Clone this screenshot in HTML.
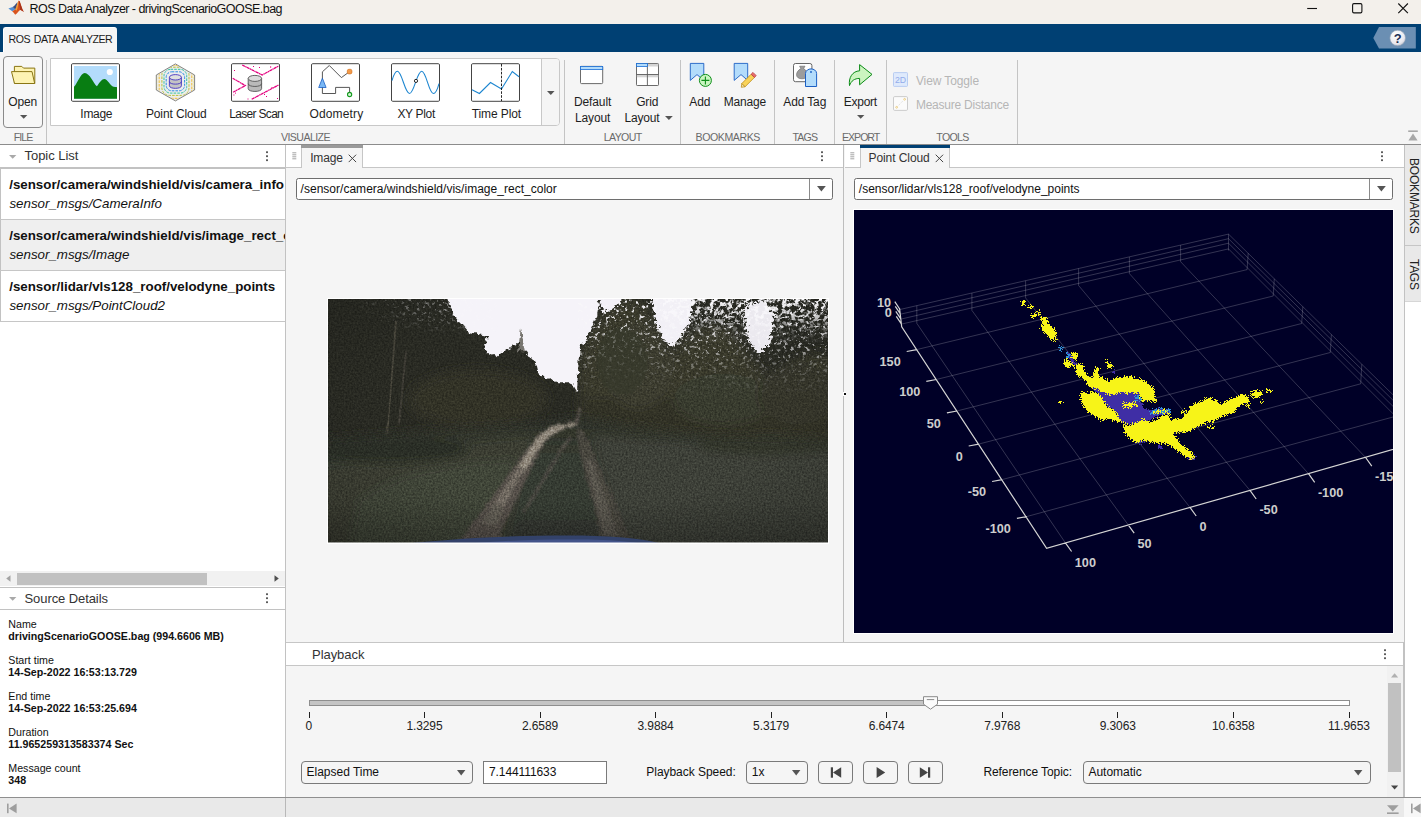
<!DOCTYPE html>
<html lang="en">
<head>
<meta charset="utf-8">
<title>ROS Data Analyzer - drivingScenarioGOOSE.bag</title>
<style>
*{box-sizing:border-box;margin:0;padding:0}
html,body{width:1421px;height:817px;overflow:hidden;background:#f5f5f5}
body{position:relative;font-family:"Liberation Sans",sans-serif;font-size:12px;color:#222;-webkit-font-smoothing:antialiased}
.abs,.t,.ln,.box{position:absolute}
.t{white-space:nowrap;line-height:1}
svg{position:absolute;overflow:visible}
.ts{font-size:12px;color:#1e1e1e}
.c{text-align:center}
.sec{font-size:11px;color:#6a6a6a;letter-spacing:.1px}
.vsep{position:absolute;top:60px;height:84px;width:1px;background:#c4c4c4}
.dis{color:#b4b4b4}
.dd{position:absolute;height:23px;border:1px solid #7a7a7a;border-radius:4px;background:#f5f5f5}
.ddw{background:#fff}
.arr{position:absolute;width:0;height:0;border-left:4.5px solid transparent;border-right:4.5px solid transparent;border-top:6px solid #555}
.b{font-weight:bold}
.i{font-style:italic}
</style>
</head>
<body>
<!-- p1_toolstrip -->
<div class="box" style="left:0px;top:0px;width:1421px;height:24px;background:#f3f0eb;"></div>
<svg style="left:8px;top:0px" width="17" height="16" viewBox="0 0 17 16">
<path d="M0.4 8.6 L4.6 6.9 L7.3 9.6 L4.2 11.2 Z" fill="#4f8fd6"/>
<path d="M4.6 6.9 C6.8 5.6 8.3 3.4 9.4 1.9 L8.6 7.2 L7.3 9.6 Z" fill="#3b4f7d"/>
<path d="M4.2 11.2 L7.3 9.6 C8.4 7.4 9.3 3.5 10.6 0.8 C11.6 0.6 12.2 2.6 13 5.2 C13.9 8 14.9 10.6 16 11.8 C14.2 11.2 13.3 9.8 12.2 10 C10.8 10.4 9.6 13.2 7.2 14.8 C6.2 13.2 5.2 12 4.2 11.2 Z" fill="#d9541e"/>
<path d="M10.6 0.8 C11.6 0.6 12.2 2.6 13 5.2 C13.9 8 14.9 10.6 16 11.8 C14.2 11.2 13.3 9.8 12.2 10 C11.8 7 11.2 3.6 10.6 0.8 Z" fill="#a8321a"/>
<path d="M7.3 9.6 C8.4 7.4 9.3 3.5 10.6 0.8 C10.4 4 10 7.6 8.6 10.8 Z" fill="#f0a23a"/>
</svg>
<div class="t" style="left:29.60px;top:2.85px;font-size:12.5px;letter-spacing:-0.532px;color:#111;">ROS Data Analyzer - drivingScenarioGOOSE.bag</div>
<svg style="left:1300px;top:0" width="121" height="24" viewBox="0 0 121 24">
<path d="M7.2 8.5 H17" stroke="#111" stroke-width="1.1" fill="none"/>
<rect x="52.6" y="3.6" width="9.3" height="9.3" rx="1.3" stroke="#111" stroke-width="1.1" fill="none"/>
<path d="M98.3 3.5 L107.9 13.1 M107.9 3.5 L98.3 13.1" stroke="#111" stroke-width="1.1" fill="none"/>
</svg>
<div class="box" style="left:0px;top:24px;width:1421px;height:28px;background:#004073;"></div>
<div class="box" style="left:3px;top:27px;width:114px;height:25px;background:#f5f5f5;border-radius:3px 3px 0 0;border-top:1px solid #fff;border-left:1px solid #fff;"></div>
<div class="t" style="left:8.60px;top:33.70px;font-size:10.6px;letter-spacing:-0.533px;color:#1a1a1a;word-spacing:1.5px;">ROS DATA ANALYZER</div>
<svg style="left:1370px;top:24px" width="51" height="28" viewBox="0 0 51 28">
<defs><radialGradient id="hg" cx="0.4" cy="0.3" r="0.8"><stop offset="0" stop-color="#ffffff"/><stop offset="0.7" stop-color="#e8e8ee"/><stop offset="1" stop-color="#b8bcc8"/></radialGradient></defs>
<path d="M3.3 14 L9 3 H45.8 V24.6 H9 Z" fill="#6b8fb3"/>
<circle cx="27.7" cy="14" r="7.8" fill="url(#hg)" stroke="#8e9fb4" stroke-width="0.6"/>
<text x="27.7" y="18.6" font-family="Liberation Sans, sans-serif" font-weight="bold" font-size="13" text-anchor="middle" fill="#1d2f55">?</text>
</svg>
<div class="box" style="left:0px;top:52px;width:1421px;height:92px;background:#f5f5f5;"></div>
<div class="box" style="left:0px;top:144px;width:1421px;height:1px;background:#8c8c8c;"></div>
<div class="box" style="left:3px;top:56px;width:40px;height:72px;background:#f7f7f7;border:1px solid #8a8a8a;border-radius:4px;"></div>
<svg style="left:10px;top:64px" width="27" height="22" viewBox="0 0 27 22">
<path d="M4.4 2.4 H11.8 L13.5 4.1 H24.8 V19.4 H4.4 Z" fill="#fdf3b3" stroke="#8a7614" stroke-width="1"/>
<path d="M1.5 7.6 H22 L24.7 19.5 H4.5 Z" fill="#fdf3b3" stroke="#8a7614" stroke-width="1" stroke-linejoin="round"/>
</svg>
<div class="t ts" style="left:8.30px;top:95.70px;font-size:12px;letter-spacing:-0.189px;">Open</div>
<svg style="left:20.2px;top:115.3px" width="7.4" height="3.7" viewBox="0 0 7.4 3.7"><path d="M0 0H7.4L3.7 3.7Z" fill="#555"/></svg>
<div class="t sec" style="left:13.70px;top:131.70px;font-size:10.6px;letter-spacing:-0.921px;">FILE</div>
<div class="vsep" style="left:46px"></div>
<div class="vsep" style="left:564px"></div>
<div class="vsep" style="left:680px"></div>
<div class="vsep" style="left:774px"></div>
<div class="vsep" style="left:834px"></div>
<div class="vsep" style="left:886px"></div>
<div class="vsep" style="left:1017px"></div>
<div class="box" style="left:50px;top:58px;width:510px;height:67.5px;background:#fff;border:1px solid #c8c8c8;border-radius:0 4px 4px 0;"></div>
<div class="box" style="left:541px;top:59px;width:18px;height:65.5px;background:#f5f5f5;border-radius:0 3px 3px 0;border-left:1px solid #c8c8c8;"></div>
<svg style="left:547.3px;top:91.2px" width="7.6" height="3.9" viewBox="0 0 7.6 3.9"><path d="M0 0H7.6L3.8 3.9Z" fill="#555"/></svg>
<svg style="left:50px;top:58px" width="500" height="50" viewBox="50 58 500 50">
<!-- Image -->
<rect x="71.5" y="63.7" width="48" height="37.6" rx="1.2" fill="#fff" stroke="#444" stroke-width="1"/>
<rect x="74" y="66" width="43" height="32.8" fill="#b3dcfb"/>
<path d="M74 86.8 C77 84 80.5 72.9 84.8 72.9 C89.5 72.9 93.5 83 96.9 86.3 C99.5 82.5 102 79 104.3 79 C107.3 79 110.5 86 113.5 86.8 C115 87.1 116.2 86.6 117 87.3 V98.8 H74 Z" fill="#087d12"/>
<circle cx="109.8" cy="72" r="3.1" fill="#fff"/>
<!-- Point Cloud -->
<path d="M175.4 63.9 L194.6 75 V90 L175.4 100.9 L156.3 90 V75 Z" fill="#ececec" stroke="#777" stroke-width="0.9"/>
<clipPath id="hexc"><path d="M175.4 64.6 L194 75.3 V89.7 L175.4 100.2 L156.9 89.7 V75.3 Z"/></clipPath>
<g fill="none" stroke-width="1" stroke-dasharray="2.6 1.1" clip-path="url(#hexc)">
<rect x="156.6" y="63.2" width="37.6" height="37.6" rx="10" stroke="#f8e71c"/>
<rect x="159.2" y="65.5" width="32.6" height="32.8" rx="9" stroke="#f6c132"/>
<rect x="161.9" y="67.2" width="27.1" height="28.2" rx="7.5" stroke="#b9c23a"/>
<rect x="164" y="69.3" width="22.7" height="23.8" rx="6.5" stroke="#35c3a0"/>
<rect x="166.2" y="71.8" width="18.4" height="19" rx="5.5" stroke="#2b8ae6"/>
</g>
<path d="M169.4 77.3 V85.8 C169.4 89.2 181.4 89.2 181.4 85.8 V77.3 Z" fill="#c4c4c4" stroke="#4532c2" stroke-width="0.9"/>
<ellipse cx="175.4" cy="77.3" rx="6" ry="2.7" fill="#e0e0e0" stroke="#4532c2" stroke-width="0.9"/>
<path d="M169.4 81.6 C169.4 85 181.4 85 181.4 81.6" fill="none" stroke="#4532c2" stroke-width="0.9"/>
<!-- Laser Scan -->
<rect x="231.5" y="63.7" width="48" height="37.6" rx="1.2" fill="#fff" stroke="#444" stroke-width="1"/>
<g fill="none" stroke="#e4007f" stroke-width="1.25" stroke-dasharray="3 0.4 1.4 0.3">
<path d="M242.2 65 L262.2 75 L278.6 66"/>
<path d="M232.7 78.2 L245.3 85.6 L232.7 92.4"/>
<path d="M251.7 99.3 L278.6 85"/>
</g>
<g fill="#e4007f"><rect x="253" y="66" width="1" height="1"/><rect x="259" y="67" width="1" height="1"/><rect x="270" y="66.4" width="1.2" height="1.2"/><rect x="233.4" y="94.5" width="1" height="1"/><rect x="235" y="92.6" width="1" height="1"/><rect x="247.5" y="98.5" width="1" height="1"/><rect x="264" y="94" width="1" height="1"/><rect x="266" y="96" width="1" height="1"/><rect x="271.5" y="87" width="1" height="1"/><rect x="277" y="98" width="1" height="1"/><rect x="234" y="70" width="1" height="1"/></g>
<path d="M248.2 78.4 V88.6 C248.2 92.4 261.6 92.4 261.6 88.6 V78.4 Z" fill="#b9b9b9" stroke="#555" stroke-width="0.9"/>
<ellipse cx="254.9" cy="78.4" rx="6.7" ry="3" fill="#dcdcdc" stroke="#555" stroke-width="0.9"/>
<path d="M248.2 83.6 C248.2 87.4 261.6 87.4 261.6 83.6" fill="none" stroke="#555" stroke-width="0.9"/>
<!-- Odometry -->
<rect x="311.5" y="63.7" width="48" height="37.6" rx="1.2" fill="#fff" stroke="#444" stroke-width="1"/>
<path d="M349.6 94.5 V87.4 H335.6 V93.5 H322.4 V71.8 L329.3 65.5 L341.4 77.6 L349.6 71.6" fill="none" stroke="#444" stroke-width="0.9"/>
<path d="M322.4 78.2 L326.1 87.5 H318.7 Z" fill="#7ab8f5" stroke="#1b5fc4" stroke-width="0.8"/>
<rect x="347.3" y="69.3" width="4.6" height="4.6" rx="1.6" fill="#f29a4a" stroke="#d9731c" stroke-width="0.7"/>
<circle cx="349.6" cy="94.5" r="2.1" fill="#d8f5d8" stroke="#139a1e" stroke-width="1.1"/>
<!-- XY Plot -->
<rect x="391.5" y="63.7" width="48" height="37.6" rx="1.2" fill="#fff" stroke="#444" stroke-width="1"/>
<path d="M392 80.6 C393.6 75 395.4 71.3 397.5 71.3 C401.8 71.3 405 93.5 409.5 93.5 C414 93.5 417 71.3 421.7 71.3 C426.2 71.3 429 93.5 433.3 93.5 C435.8 93.5 437.6 89 439 83.6" fill="none" stroke="#1d86d0" stroke-width="1.1"/>
<circle cx="416" cy="80.9" r="1.6" fill="#fff" stroke="#111" stroke-width="0.9"/>
<!-- Time Plot -->
<rect x="471.5" y="63.7" width="48" height="37.6" rx="1.2" fill="#fff" stroke="#444" stroke-width="1"/>
<path d="M472 89.7 L479.4 93.5 L490.5 82.5 L501.5 89 L512.3 71.5 L519 76.7" fill="none" stroke="#1d86d0" stroke-width="1.1"/>
<path d="M501.5 64 V101" stroke="#111" stroke-width="0.9" stroke-dasharray="2.6 1.3" fill="none"/>
</svg>
<div class="t ts" style="left:80.35px;top:107.70px;font-size:12px;letter-spacing:-0.290px;">Image</div>
<div class="t ts" style="left:145.95px;top:107.70px;font-size:12px;letter-spacing:-0.122px;">Point Cloud</div>
<div class="t ts" style="left:229.30px;top:107.70px;font-size:12px;letter-spacing:-0.690px;">Laser Scan</div>
<div class="t ts" style="left:309.50px;top:107.70px;font-size:12px;letter-spacing:0.140px;">Odometry</div>
<div class="t ts" style="left:397.45px;top:107.70px;font-size:12px;letter-spacing:-0.329px;">XY Plot</div>
<div class="t ts" style="left:471.80px;top:107.70px;font-size:12px;letter-spacing:-0.115px;">Time Plot</div>
<div class="t sec" style="left:281.00px;top:131.70px;font-size:10.6px;letter-spacing:-0.577px;">VISUALIZE</div>
<!-- p2_toolstrip2 -->
<svg style="left:570px;top:58px" width="460" height="60" viewBox="570 58 460 60">
<!-- default layout -->
<rect x="580.5" y="66.4" width="22.2" height="17.2" rx="1" fill="#fff" stroke="#5a5a5a" stroke-width="0.9"/>
<rect x="580.5" y="66.4" width="22.2" height="3.2" fill="#b3dcfb" stroke="#1b6fd8" stroke-width="0.8"/>
<!-- grid layout -->
<rect x="636.5" y="63.5" width="22" height="22" rx="0.8" fill="#fff" stroke="#5a5a5a" stroke-width="0.9"/>
<rect x="647.8" y="63.9" width="10.4" height="2.6" fill="#d4d4d4"/>
<rect x="636.9" y="74.7" width="21.3" height="2.6" fill="#d4d4d4"/>
<path d="M647.4 63.5 V85.5 M636.5 74.5 H658.5" stroke="#5a5a5a" stroke-width="0.9" fill="none"/>
<rect x="636.5" y="63.5" width="10.9" height="3" fill="#b3dcfb" stroke="#1b6fd8" stroke-width="0.8"/>
<!-- add bookmark -->
<path d="M690.3 63.4 H703.8 V80.4 L697 74.6 L690.3 80.4 Z" fill="#b3dcfb" stroke="#1b5fc4" stroke-width="0.9" stroke-linejoin="miter"/>
<circle cx="705.4" cy="80.4" r="6" fill="#c9f5c0" stroke="#0f8f1a" stroke-width="1"/>
<path d="M705.4 76.4 V84.4 M701.4 80.4 H709.4" stroke="#0f8f1a" stroke-width="1.1" fill="none"/>
<!-- manage bookmark -->
<path d="M734.2 63.4 H747.7 V80.4 L741 74.6 L734.2 80.4 Z" fill="#b3dcfb" stroke="#1b5fc4" stroke-width="0.9"/>
<g transform="translate(748.8 79.8) rotate(-45)">
<rect x="-7.6" y="-2.3" width="13.2" height="4.6" fill="#f9d35a" stroke="#b8860b" stroke-width="0.7"/>
<path d="M-7.6 -2.3 L-10.6 0 L-7.6 2.3 Z" fill="#f3e3b0" stroke="#b8860b" stroke-width="0.7"/>
<rect x="5.6" y="-2.3" width="2.6" height="4.6" fill="#e86a6a" stroke="#b33a3a" stroke-width="0.7"/>
</g>
<!-- add tag -->
<rect x="793.5" y="63.5" width="18.4" height="18.2" rx="2" fill="#fff" stroke="#555" stroke-width="0.9"/>
<path d="M799.6 66.2 H805 L803.6 68.6 C808.6 71.4 809.4 78.8 802 78.8 C794.4 78.8 795.4 71.4 800.9 68.6 Z" fill="#9c9c9c" stroke="#666" stroke-width="0.6"/>
<path d="M805.5 86.5 V73.5 C805.5 70.5 808.5 68.9 811 68.9 C813.6 68.9 816.6 70.5 816.6 73.5 V86.5 Z" fill="#b3dcfb" stroke="#1b5fc4" stroke-width="1"/>
<circle cx="811" cy="72" r="0.9" fill="#1b5fc4"/>
<!-- export -->
<path d="M849.5 85.6 C848.4 77.6 852.4 71.2 859.6 70.8 V64.6 L872 74.4 L859.6 84.8 V78.4 C854.6 78.4 851.2 80.8 849.5 85.6 Z" fill="#ccf5c0" stroke="#0a8a16" stroke-width="1" stroke-linejoin="miter"/>
<!-- 2D -->
<rect x="893.5" y="72.6" width="14" height="13.8" rx="0.8" fill="#dfeafc" stroke="#b3c8f0" stroke-width="0.9"/>
<text x="900.5" y="83" font-family="Liberation Sans, sans-serif" font-size="9.7" text-anchor="middle" fill="#93acea" textLength="11.2" lengthAdjust="spacingAndGlyphs">2D</text>
<!-- measure -->
<rect x="893.5" y="96.6" width="14" height="13.8" rx="1.2" fill="#fbfbfb" stroke="#c6c6c6" stroke-width="0.9"/>
<path d="M897.6 106.4 L903.6 100.2" stroke="#d0d0d0" stroke-width="0.8" stroke-dasharray="1 1.2" fill="none"/>
<circle cx="904.6" cy="99.3" r="0.9" fill="none" stroke="#e5b84a" stroke-width="0.6"/>
<circle cx="896.6" cy="107.3" r="0.9" fill="none" stroke="#e5b84a" stroke-width="0.6"/>
</svg>
<div class="t ts" style="left:573.95px;top:95.70px;font-size:12px;letter-spacing:-0.103px;">Default</div>
<div class="t ts" style="left:575.10px;top:112.00px;font-size:12px;letter-spacing:-0.172px;">Layout</div>
<div class="t ts" style="left:636.20px;top:95.70px;font-size:12px;letter-spacing:-0.168px;">Grid</div>
<div class="t ts" style="left:624.40px;top:112.00px;font-size:12px;letter-spacing:-0.172px;">Layout</div>
<svg style="left:665.2px;top:116.3px" width="7.8" height="3.9" viewBox="0 0 7.8 3.9"><path d="M0 0H7.8L3.9 3.9Z" fill="#555"/></svg>
<div class="t sec" style="left:603.70px;top:131.70px;font-size:10.6px;letter-spacing:-0.604px;">LAYOUT</div>
<div class="t ts" style="left:689.30px;top:95.70px;font-size:12px;letter-spacing:-0.051px;">Add</div>
<div class="t ts" style="left:723.70px;top:95.70px;font-size:12px;letter-spacing:-0.161px;">Manage</div>
<div class="t sec" style="left:695.50px;top:131.70px;font-size:10.6px;letter-spacing:-0.425px;">BOOKMARKS</div>
<div class="t ts" style="left:783.30px;top:95.70px;font-size:12px;letter-spacing:-0.131px;">Add Tag</div>
<div class="t sec" style="left:792.50px;top:131.70px;font-size:10.6px;letter-spacing:-0.843px;">TAGS</div>
<div class="t ts" style="left:843.80px;top:95.70px;font-size:12px;letter-spacing:-0.264px;">Export</div>
<svg style="left:857.4px;top:115.3px" width="7.4" height="3.7" viewBox="0 0 7.4 3.7"><path d="M0 0H7.4L3.7 3.7Z" fill="#555"/></svg>
<div class="t sec" style="left:842.00px;top:131.70px;font-size:10.6px;letter-spacing:-1.016px;">EXPORT</div>
<div class="t" style="left:915.90px;top:74.60px;font-size:12px;letter-spacing:-0.107px;color:#b6b6b6;">View Toggle</div>
<div class="t" style="left:915.90px;top:98.50px;font-size:12px;letter-spacing:-0.226px;color:#b6b6b6;">Measure Distance</div>
<div class="t sec" style="left:936.30px;top:131.70px;font-size:10.6px;letter-spacing:-0.688px;">TOOLS</div>
<svg style="left:1407px;top:129px" width="12" height="14" viewBox="0 0 12 14">
<rect x="1.2" y="1.4" width="9.6" height="1.6" fill="#a8a8a8"/><path d="M6 4.6 L10.6 11.6 H1.4 Z" fill="#a8a8a8"/></svg>
<!-- p3_left -->
<div class="box" style="left:0px;top:145px;width:285px;height:652px;background:#fff;"></div>
<div class="box" style="left:285px;top:145px;width:1px;height:652px;background:#c2c2c2;"></div>
<svg style="left:8.6px;top:155.0px" width="7.4" height="3.8" viewBox="0 0 7.4 3.8"><path d="M0 0H7.4L3.7 3.8Z" fill="#a9a9a9"/></svg>
<div class="t" style="left:24.50px;top:149.40px;font-size:13px;letter-spacing:-0.039px;color:#333;">Topic List</div>
<svg style="left:265px;top:150.9px" width="4" height="11" viewBox="0 0 4 11"><rect x="1.1" y="0.3" width="1.8" height="1.8" fill="#4a4a4a"/><rect x="1.1" y="4.3" width="1.8" height="1.8" fill="#4a4a4a"/><rect x="1.1" y="8.3" width="1.8" height="1.8" fill="#4a4a4a"/></svg>
<div class="box" style="left:0px;top:167px;width:285px;height:2px;background:#c2c2c2;"></div>
<div class="box" style="left:0px;top:167px;width:1px;height:154px;background:#c2c2c2;"></div>
<div class="box" style="left:1px;top:220px;width:284px;height:50px;background:#efefef;"></div>
<div class="box" style="left:0px;top:219px;width:285px;height:1px;background:#c6c6c6;"></div>
<div class="box" style="left:0px;top:270px;width:285px;height:1px;background:#c6c6c6;"></div>
<div class="box" style="left:0px;top:321px;width:285px;height:1px;background:#c6c6c6;"></div>
<div class="abs" style="left:1px;top:169px;width:284px;height:152px;overflow:hidden">
<div class="t" style="left:8.20px;top:8.84px;font-size:13.33px;color:#111;font-weight:bold;">/sensor/camera/windshield/vis/camera_info</div>
<div class="t" style="left:8.40px;top:27.84px;font-size:13.33px;color:#111;font-style:italic;">sensor_msgs/CameraInfo</div>
<div class="t" style="left:8.20px;top:59.84px;font-size:13.33px;color:#111;font-weight:bold;">/sensor/camera/windshield/vis/image_rect_color</div>
<div class="t" style="left:8.40px;top:78.84px;font-size:13.33px;color:#111;font-style:italic;">sensor_msgs/Image</div>
<div class="t" style="left:8.20px;top:110.84px;font-size:13.33px;color:#111;font-weight:bold;">/sensor/lidar/vls128_roof/velodyne_points</div>
<div class="t" style="left:8.40px;top:129.84px;font-size:13.33px;color:#111;font-style:italic;">sensor_msgs/PointCloud2</div>
</div>
<div class="box" style="left:0px;top:571px;width:285px;height:15px;background:#f1f1f1;"></div>
<div class="box" style="left:17px;top:572.5px;width:190px;height:12.5px;background:#c1c1c1;"></div>
<svg style="left:0;top:571px" width="285" height="15" viewBox="0 0 285 15">
<path d="M10.5 4.2 V10.8 L6.2 7.5 Z" fill="#a3a3a3"/><path d="M274.5 4.2 V10.8 L278.8 7.5 Z" fill="#505050"/></svg>
<div class="box" style="left:0px;top:587px;width:285px;height:1px;background:#c2c2c2;"></div>
<svg style="left:8.6px;top:597.0px" width="7.4" height="3.8" viewBox="0 0 7.4 3.8"><path d="M0 0H7.4L3.7 3.8Z" fill="#a9a9a9"/></svg>
<div class="t" style="left:24.50px;top:591.50px;font-size:13px;letter-spacing:-0.081px;color:#333;">Source Details</div>
<svg style="left:265px;top:592.9px" width="4" height="11" viewBox="0 0 4 11"><rect x="1.1" y="0.3" width="1.8" height="1.8" fill="#4a4a4a"/><rect x="1.1" y="4.3" width="1.8" height="1.8" fill="#4a4a4a"/><rect x="1.1" y="8.3" width="1.8" height="1.8" fill="#4a4a4a"/></svg>
<div class="box" style="left:0px;top:609px;width:285px;height:1px;background:#c2c2c2;"></div>
<div class="t" style="left:8.30px;top:618.66px;font-size:10.67px;color:#111;">Name</div>
<div class="t" style="left:8.30px;top:630.66px;font-size:10.67px;color:#111;font-weight:bold;">drivingScenarioGOOSE.bag (994.6606 MB)</div>
<div class="t" style="left:8.30px;top:654.66px;font-size:10.67px;color:#111;">Start time</div>
<div class="t" style="left:8.30px;top:666.66px;font-size:10.67px;color:#111;font-weight:bold;">14-Sep-2022 16:53:13.729</div>
<div class="t" style="left:8.30px;top:690.66px;font-size:10.67px;color:#111;">End time</div>
<div class="t" style="left:8.30px;top:702.66px;font-size:10.67px;color:#111;font-weight:bold;">14-Sep-2022 16:53:25.694</div>
<div class="t" style="left:8.30px;top:726.66px;font-size:10.67px;color:#111;">Duration</div>
<div class="t" style="left:8.30px;top:738.66px;font-size:10.67px;color:#111;font-weight:bold;">11.965259313583374 Sec</div>
<div class="t" style="left:8.30px;top:762.66px;font-size:10.67px;color:#111;">Message count</div>
<div class="t" style="left:8.30px;top:774.66px;font-size:10.67px;color:#111;font-weight:bold;">348</div>
<!-- p4_center -->
<div class="box" style="left:286px;top:145px;width:1118px;height:497px;background:#f5f5f5;"></div>
<div class="box" style="left:286px;top:145px;width:558px;height:22px;background:#fff;"></div>
<div class="box" style="left:286px;top:167px;width:558px;height:1px;background:#c6c6c6;"></div>
<div class="box" style="left:845px;top:145px;width:559px;height:22px;background:#fff;"></div>
<div class="box" style="left:845px;top:167px;width:559px;height:1px;background:#c6c6c6;"></div>
<div class="box" style="left:843px;top:145px;width:1px;height:497px;background:#bdbdbd;"></div>
<div class="box" style="left:843px;top:392px;width:3px;height:4px;background:#fff;"></div>
<div class="box" style="left:844px;top:393px;width:1.6px;height:2px;background:#111;"></div>
<div class="box" style="left:301px;top:145px;width:62px;height:23px;background:#f5f5f5;border-left:1px solid #c6c6c6;border-right:1px solid #c6c6c6;"></div>
<div class="box" style="left:301px;top:145px;width:62px;height:3px;background:#9a9a9a;"></div>
<svg style="left:291.6px;top:151.7px" width="5" height="8" viewBox="0 0 5 8"><path d="M0.3 0.8 H4.3 M0.3 2.8 H4.3 M0.3 4.8 H4.3 M0.3 6.8 H4.3" stroke="#8a8a8a" stroke-width="0.8" fill="none"/></svg>
<div class="t" style="left:310.20px;top:151.50px;font-size:12px;letter-spacing:-0.150px;color:#333;">Image</div>
<svg style="left:347.7px;top:153.6px" width="9" height="9" viewBox="0 0 9 9"><path d="M0.7 0.7 L8.1 8.1 M8.1 0.7 L0.7 8.1" stroke="#444" stroke-width="1" fill="none"/></svg>
<svg style="left:820px;top:150.9px" width="4" height="11" viewBox="0 0 4 11"><rect x="1.1" y="0.3" width="1.8" height="1.8" fill="#4a4a4a"/><rect x="1.1" y="4.3" width="1.8" height="1.8" fill="#4a4a4a"/><rect x="1.1" y="8.3" width="1.8" height="1.8" fill="#4a4a4a"/></svg>
<div class="box" style="left:859.5px;top:145px;width:90px;height:23px;background:#f5f5f5;border-left:1px solid #c6c6c6;border-right:1px solid #c6c6c6;"></div>
<div class="box" style="left:859.5px;top:145px;width:90px;height:3px;background:#004073;"></div>
<svg style="left:850px;top:151.7px" width="5" height="8" viewBox="0 0 5 8"><path d="M0.3 0.8 H4.3 M0.3 2.8 H4.3 M0.3 4.8 H4.3 M0.3 6.8 H4.3" stroke="#8a8a8a" stroke-width="0.8" fill="none"/></svg>
<div class="t" style="left:868.50px;top:151.50px;font-size:12px;letter-spacing:-0.076px;color:#333;">Point Cloud</div>
<svg style="left:934.9px;top:153.6px" width="9" height="9" viewBox="0 0 9 9"><path d="M0.7 0.7 L8.1 8.1 M8.1 0.7 L0.7 8.1" stroke="#444" stroke-width="1" fill="none"/></svg>
<svg style="left:1380px;top:150.9px" width="4" height="11" viewBox="0 0 4 11"><rect x="1.1" y="0.3" width="1.8" height="1.8" fill="#4a4a4a"/><rect x="1.1" y="4.3" width="1.8" height="1.8" fill="#4a4a4a"/><rect x="1.1" y="8.3" width="1.8" height="1.8" fill="#4a4a4a"/></svg>
<div class="dd ddw" style="left:296px;top:178px;width:537px;height:22px;border-color:#6e6e6e;border-radius:2.5px"></div>
<div class="box" style="left:809px;top:179px;width:1px;height:20px;background:#8a8a8a;"></div>
<svg style="left:816.6px;top:186.2px" width="8.8" height="5.6" viewBox="0 0 8.8 5.6"><path d="M0 0H8.8L4.4 5.6Z" fill="#555"/></svg>
<div class="t" style="left:300.60px;top:182.60px;font-size:12px;letter-spacing:0.016px;color:#111;">/sensor/camera/windshield/vis/image_rect_color</div>
<div class="dd ddw" style="left:854px;top:178px;width:539px;height:22px;border-color:#6e6e6e;border-radius:2.5px"></div>
<div class="box" style="left:1369px;top:179px;width:1px;height:20px;background:#8a8a8a;"></div>
<svg style="left:1376.6px;top:186.2px" width="8.8" height="5.6" viewBox="0 0 8.8 5.6"><path d="M0 0H8.8L4.4 5.6Z" fill="#555"/></svg>
<div class="t" style="left:858.80px;top:182.60px;font-size:12px;color:#111;">/sensor/lidar/vls128_roof/velodyne_points</div>
<div class="box" style="left:1404px;top:145px;width:17px;height:652px;background:#fff;"></div>
<div class="box" style="left:1404px;top:145px;width:1px;height:652px;background:#c2c2c2;"></div>
<div class="box" style="left:1405px;top:145px;width:16px;height:156px;background:#e9e9e9;"></div>
<div class="box" style="left:1405px;top:245px;width:16px;height:1px;background:#c6c6c6;"></div>
<div class="box" style="left:1405px;top:301px;width:16px;height:1px;background:#d6d6d6;"></div>
<div class="t" style="left:1421px;top:157.5px;font-size:12px;color:#222;transform-origin:0 0;transform:rotate(90deg);height:17px;line-height:14px;letter-spacing:-0.2px">BOOKMARKS</div>
<div class="t" style="left:1421px;top:258.6px;font-size:12px;color:#222;transform-origin:0 0;transform:rotate(90deg);height:17px;line-height:14px;letter-spacing:-0.3px">TAGS</div>
<!-- p5_playback -->
<div class="box" style="left:286px;top:642px;width:1118px;height:1px;background:#c6c6c6;"></div>
<div class="box" style="left:286px;top:643px;width:1117px;height:22px;background:#fff;"></div>
<div class="box" style="left:286px;top:665px;width:1118px;height:1px;background:#c6c6c6;"></div>
<div class="box" style="left:286px;top:666px;width:1117px;height:131px;background:#f5f5f5;"></div>
<div class="box" style="left:1403px;top:642px;width:1px;height:155px;background:#c2c2c2;"></div>
<div class="t" style="left:312.00px;top:647.60px;font-size:13px;letter-spacing:-0.044px;color:#333;">Playback</div>
<svg style="left:1383px;top:649.2px" width="4" height="11" viewBox="0 0 4 11"><rect x="1.1" y="0.3" width="1.8" height="1.8" fill="#4a4a4a"/><rect x="1.1" y="4.3" width="1.8" height="1.8" fill="#4a4a4a"/><rect x="1.1" y="8.3" width="1.8" height="1.8" fill="#4a4a4a"/></svg>
<div class="box" style="left:309px;top:700px;width:1041px;height:6px;background:#fff;border:1px solid #8e8e8e;"></div>
<div class="box" style="left:309px;top:700px;width:622px;height:6px;background:#c4c4c4;border:1px solid #8e8e8e;"></div>
<svg style="left:922px;top:695px" width="18" height="16" viewBox="922 695 18 16">
<path d="M923.5 696.7 H937.5 V704.2 L930.5 709.2 L923.5 704.2 Z" fill="#fbfbfb" stroke="#8a8a8a" stroke-width="1"/>
<path d="M926.8 699.6 H934.2" stroke="#8a8a8a" stroke-width="1" fill="none"/></svg>
<div class="box" style="left:309px;top:712px;width:1px;height:6px;background:#222;"></div>
<div class="t" style="left:305.56px;top:719.80px;font-size:12px;color:#222;">0</div>
<div class="box" style="left:424px;top:712px;width:1px;height:6px;background:#222;"></div>
<div class="t" style="left:406.46px;top:719.80px;font-size:12px;letter-spacing:-0.117px;color:#222;">1.3295</div>
<div class="box" style="left:540px;top:712px;width:1px;height:6px;background:#222;"></div>
<div class="t" style="left:522.01px;top:719.80px;font-size:12px;letter-spacing:-0.117px;color:#222;">2.6589</div>
<div class="box" style="left:655px;top:712px;width:1px;height:6px;background:#222;"></div>
<div class="t" style="left:637.57px;top:719.80px;font-size:12px;letter-spacing:-0.117px;color:#222;">3.9884</div>
<div class="box" style="left:771px;top:712px;width:1px;height:6px;background:#222;"></div>
<div class="t" style="left:753.12px;top:719.80px;font-size:12px;letter-spacing:-0.117px;color:#222;">5.3179</div>
<div class="box" style="left:886px;top:712px;width:1px;height:6px;background:#222;"></div>
<div class="t" style="left:868.68px;top:719.80px;font-size:12px;letter-spacing:-0.117px;color:#222;">6.6474</div>
<div class="box" style="left:1002px;top:712px;width:1px;height:6px;background:#222;"></div>
<div class="t" style="left:984.24px;top:719.80px;font-size:12px;letter-spacing:-0.117px;color:#222;">7.9768</div>
<div class="box" style="left:1117px;top:712px;width:1px;height:6px;background:#222;"></div>
<div class="t" style="left:1099.79px;top:719.80px;font-size:12px;letter-spacing:-0.117px;color:#222;">9.3063</div>
<div class="box" style="left:1233px;top:712px;width:1px;height:6px;background:#222;"></div>
<div class="t" style="left:1212.05px;top:719.80px;font-size:12px;letter-spacing:-0.111px;color:#222;">10.6358</div>
<div class="box" style="left:1349px;top:712px;width:1px;height:6px;background:#222;"></div>
<div class="t" style="left:1328.05px;top:719.80px;font-size:12px;letter-spacing:-0.112px;color:#222;">11.9653</div>
<div class="dd" style="left:301px;top:761px;width:171.5px;height:23px;border-radius:4px"></div>
<div class="t" style="left:306.60px;top:765.80px;font-size:12px;letter-spacing:-0.025px;color:#111;">Elapsed Time</div>
<svg style="left:456.6px;top:769.6px" width="8.4" height="5.4" viewBox="0 0 8.4 5.4"><path d="M0 0H8.4L4.2 5.4Z" fill="#555"/></svg>
<div class="box" style="left:483px;top:761px;width:124px;height:22.6px;background:#fff;border:1px solid #7a7a7a;"></div>
<div class="t" style="left:489.00px;top:765.80px;font-size:12px;letter-spacing:-0.099px;color:#111;">7.144111633</div>
<div class="t" style="left:646.30px;top:765.80px;font-size:12px;letter-spacing:-0.044px;color:#111;">Playback Speed:</div>
<div class="dd" style="left:746px;top:761px;width:62px;height:23px;border-radius:4px"></div>
<div class="t" style="left:751.80px;top:765.80px;font-size:12px;color:#111;">1x</div>
<svg style="left:791.8px;top:769.6px" width="8.4" height="5.4" viewBox="0 0 8.4 5.4"><path d="M0 0H8.4L4.2 5.4Z" fill="#555"/></svg>
<div class="dd" style="left:818px;top:761px;width:35px;height:23px;border-radius:4px"></div>
<div class="dd" style="left:863px;top:761px;width:35px;height:23px;border-radius:4px"></div>
<div class="dd" style="left:908px;top:761px;width:35px;height:23px;border-radius:4px"></div>
<svg style="left:818px;top:761px" width="125" height="23" viewBox="818 761 125 23">
<g fill="#444">
<rect x="830.8" y="767.3" width="2.2" height="10.4"/><path d="M841.2 767.3 V777.7 L833 772.5 Z"/>
<path d="M876.6 767 V778 L885.2 772.5 Z"/>
<path d="M919.8 767.3 V777.7 L928 772.5 Z"/><rect x="928" y="767.3" width="2.2" height="10.4"/>
</g></svg>
<div class="t" style="left:983.40px;top:765.80px;font-size:12px;letter-spacing:-0.077px;color:#111;">Reference Topic:</div>
<div class="dd" style="left:1083px;top:761px;width:288px;height:23px;border-radius:4px"></div>
<div class="t" style="left:1088.40px;top:765.80px;font-size:12px;color:#111;">Automatic</div>
<svg style="left:1354.4px;top:769.6px" width="8.4" height="5.4" viewBox="0 0 8.4 5.4"><path d="M0 0H8.4L4.2 5.4Z" fill="#555"/></svg>
<div class="box" style="left:1387px;top:666px;width:16px;height:131px;background:#f1f1f1;"></div>
<div class="box" style="left:1388px;top:683px;width:13px;height:89px;background:#c1c1c1;"></div>
<svg style="left:1387px;top:666px" width="16" height="131" viewBox="0 0 16 131">
<path d="M7.6 7.2 L11.2 11.4 H4 Z" fill="#b0b0b0"/><path d="M7.6 123.6 L11.2 119.4 H4 Z" fill="#444"/></svg>
<div class="box" style="left:0px;top:797px;width:1421px;height:1px;background:#8f8f8f;"></div>
<div class="box" style="left:0px;top:798px;width:1404px;height:19px;background:#e9e9e9;"></div>
<div class="box" style="left:1404px;top:798px;width:17px;height:19px;background:#f7f7f7;"></div>
<div class="box" style="left:285px;top:798px;width:1px;height:19px;background:#b8b8b8;"></div>
<svg style="left:0;top:798px" width="1421" height="19" viewBox="0 798 1421 19">
<g fill="#9e9e9e">
<rect x="7" y="803.6" width="1.6" height="9.6"/><path d="M16.6 803.6 V813.2 L9 808.4 Z"/>
<path d="M1387 805.2 H1398.6 L1392.8 811.6 Z"/><rect x="1387" y="812.4" width="11.6" height="1.6"/>
<rect x="1411" y="803.6" width="1.6" height="9.6"/><path d="M1420.6 803.6 V813.2 L1413 808.4 Z"/>
</g></svg>
<!-- p6_pc -->
<div class="box" style="left:853px;top:209px;width:541px;height:425px;background:#fff;"></div>
<svg style="left:854px;top:210px" width="539" height="423" viewBox="854 210 539 423">
<defs><clipPath id="pcc"><rect x="854" y="210" width="539" height="423"/></clipPath></defs>
<rect x="854" y="210" width="539" height="423" fill="#000027"/>
<g clip-path="url(#pcc)">
<path d="M900 309.5L1228.5 234.1L1400 401.6M900.5 314.2L1228.5 238.7L1400 407.1M901 319.1L1228.5 243.2L1400 413.3M901.5 324.1L1228.5 248.9L1400 420.7M916.8 305.6V323.3M971.9 293.0V310.4M1025.6 280.7V297.9M1078.6 268.5V285.5M1129.4 256.9V273.6M1180.6 245.1V261.7M1228.5 234.1V250.5M1247.1 269.6L1248.1999999999998 253.3M1273.2 296L1274.3 278.8M1301.7 323.5L1302.8 306.7M1330.3 352.5L1331.3999999999999 334.6M1360.7 383.8L1361.8 364.3M916.7 349.6L1247.1 269.6M936.3 379.5L1273.2 296M956.9 411L1301.7 323.5M978.7 444.1L1330.3 352.5M1002.1 479.6L1360.7 383.8M1026.9 516.5L1393 417M1065.4 542.9L916.8 323.3M1128 524.6L971.9 310.4M1190 507.4L1025.6 297.9M1250 490.4L1078.6 285.5M1308.5 473.7L1129.4 273.6M1365.6 457.5L1180.6 261.7" fill="none" stroke="#ffffff" stroke-opacity="0.2" stroke-width="1"/>
<path d="M899.6 308.9L901.7 326.8L1046.6 548.3L1400 447.5M900 309.5l-5.2 -7.8M900.5 314.2l-5.2 -7.8M901 319.1l-5.2 -7.8M901.5 324.1l-5.2 -7.8M916.7 349.6l-10 1.9M936.3 379.5l-10 1.9M956.9 411l-10 1.9M978.7 444.1l-10 1.9M1002.1 479.6l-10 1.9M1026.9 516.5l-10 1.9M1065.4 542.9l6.2 8.6M1128 524.6l6.2 8.6M1190 507.4l6.2 8.6M1250 490.4l6.2 8.6M1308.5 473.7l6.2 8.6M1365.6 457.5l6.2 8.6" fill="none" stroke="#d4d4d4" stroke-width="1.2"/>
<path d="M1067 351.5h1M1066 353.5h4M1068 354.5h2M1069 355.5h2M1068 356.5h5M1069 357.5h1M1069 358.5h4M1070 359.5h3M1071 360.5h3M1071 361.5h3M1071 362.5h1M1073 362.5h2M1072 363.5h5M1074 364.5h2M1114 369.5h1M1113 371.5h2M1112 372.5h3M1114 373.5h1M1093 387.5h1M1093 388.5h3M1097 388.5h1M1093 389.5h1M1096 389.5h3M1094 390.5h4M1099 390.5h1M1095 391.5h5M1097 392.5h8M1118 392.5h1M1120 392.5h4M1125 392.5h1M1128 392.5h1M1131 392.5h3M1137 392.5h2M1099 393.5h8M1108 393.5h1M1116 393.5h1M1118 393.5h2M1121 393.5h4M1128 393.5h5M1135 393.5h1M1138 393.5h1M1099 394.5h6M1106 394.5h1M1108 394.5h1M1110 394.5h3M1115 394.5h1M1117 394.5h10M1128 394.5h12M1099 395.5h1M1101 395.5h8M1111 395.5h28M1101 396.5h38M1101 397.5h1M1103 397.5h36M1103 398.5h36M1102 399.5h39M1103 400.5h37M1106 401.5h34M1104 402.5h37M1106 403.5h37M1106 404.5h1M1108 404.5h36M1107 405.5h35M1107 406.5h2M1110 406.5h33M1109 407.5h34M1158 407.5h1M1112 408.5h32M1146 408.5h1M1158 408.5h1M1168 408.5h1M1114 409.5h33M1148 409.5h1M1154 409.5h1M1157 409.5h1M1160 409.5h5M1167 409.5h1M1169 409.5h1M1114 410.5h39M1154 410.5h2M1157 410.5h13M1116 411.5h53M1115 412.5h1M1117 412.5h50M1168 412.5h1M1118 413.5h45M1165 413.5h2M1118 414.5h44M1163 414.5h1M1167 414.5h1M1119 415.5h40M1117 416.5h38M1157 416.5h1M1119 417.5h35M1155 417.5h2M1158 417.5h1M1119 418.5h22M1143 418.5h1M1145 418.5h7M1121 419.5h22M1145 419.5h6M1152 419.5h1M1121 420.5h20M1143 420.5h2M1146 420.5h2M1149 420.5h1M1122 421.5h1M1124 421.5h13M1138 421.5h1M1122 422.5h1M1126 422.5h6M1133 422.5h2M1136 422.5h2M1126 423.5h1M1128 423.5h2M1131 423.5h1M1133 423.5h1M1125 424.5h1M1129 424.5h1M1131 424.5h1M1140 440.5h1M1140 441.5h1M1142 441.5h1M1144 441.5h1M1137 442.5h1M1139 442.5h2M1142 442.5h1M1144 442.5h1M1135 443.5h1M1139 444.5h1M1141 444.5h1M1159 444.5h1M1158 445.5h2M1158 446.5h4M1158 447.5h4M1158 448.5h1M1160 448.5h3M1194 454.5h1M1195 456.5h2M1188 457.5h1M1193 457.5h1M1187 458.5h1M1189 458.5h1M1191 458.5h1M1194 458.5h1M1188 459.5h1M1192 459.5h3" stroke="#3f2ea5" stroke-width="1" fill="none"/>
<path d="M1059 345.5h1M1061 346.5h1M1058 347.5h3M1062 347.5h2M1060 348.5h2M1060 349.5h1M1062 349.5h1M1059 350.5h2M1061 351.5h1M1066 352.5h2M1066 353.5h1M1067 354.5h4M1068 355.5h2M1071 355.5h1M1066 356.5h3M1066 357.5h3M1135 395.5h1M1137 395.5h2M1140 395.5h1M1134 396.5h1M1137 396.5h2M1135 397.5h6M1135 398.5h6M1139 399.5h3M1134 400.5h4M1140 400.5h1M1139 401.5h1M1159 407.5h1M1161 407.5h1M1152 408.5h1M1156 408.5h1M1160 408.5h3M1168 408.5h1M1155 409.5h2M1159 409.5h1M1166 409.5h1M1168 409.5h3M1152 410.5h5M1159 410.5h1M1161 410.5h1M1164 410.5h1M1166 410.5h1M1168 410.5h2M1149 411.5h1M1152 411.5h1M1155 411.5h1M1161 411.5h4M1167 411.5h1M1169 411.5h2M1151 412.5h2M1155 412.5h1M1157 412.5h1M1161 412.5h1M1163 412.5h2M1167 412.5h1M1169 412.5h2M1150 413.5h3M1160 413.5h1M1162 413.5h1M1150 414.5h1M1153 414.5h2M1157 414.5h1M1162 414.5h1" stroke="#2f8fd8" stroke-width="1" fill="none"/>
<path d="M1023 300.5h2M1020 301.5h1M1022 301.5h4M1022 302.5h3M1022 303.5h2M1022 304.5h3M1030 304.5h1M1021 305.5h2M1025 305.5h1M1028 305.5h1M1031 305.5h1M1030 306.5h4M1027 307.5h4M1032 307.5h1M1030 308.5h2M1039 309.5h1M1039 310.5h1M1036 311.5h2M1035 312.5h1M1038 312.5h3M1031 313.5h1M1034 313.5h1M1038 313.5h1M1034 314.5h3M1038 314.5h3M1030 315.5h7M1038 315.5h1M1032 316.5h4M1041 316.5h1M1031 317.5h2M1040 317.5h2M1043 317.5h4M1033 318.5h1M1041 318.5h5M1047 318.5h1M1040 319.5h6M1041 320.5h1M1043 320.5h5M1042 321.5h7M1042 322.5h5M1048 322.5h1M1042 323.5h5M1041 324.5h1M1043 324.5h7M1041 325.5h2M1044 325.5h6M1041 326.5h11M1042 327.5h10M1054 327.5h1M1039 328.5h1M1042 328.5h11M1054 328.5h1M1042 329.5h13M1042 330.5h12M1055 330.5h1M1044 331.5h11M1043 332.5h1M1045 332.5h12M1044 333.5h1M1046 333.5h11M1047 334.5h9M1048 335.5h7M1056 335.5h1M1047 336.5h1M1049 336.5h7M1049 337.5h5M1055 337.5h1M1050 338.5h4M1055 338.5h1M1050 339.5h1M1053 339.5h1M1055 339.5h3M1051 340.5h1M1054 340.5h1M1053 341.5h1M1055 341.5h1M1071 352.5h1M1073 352.5h1M1075 352.5h1M1071 353.5h7M1072 354.5h4M1077 354.5h1M1071 355.5h7M1073 356.5h5M1070 357.5h7M1066 358.5h2M1073 358.5h4M1064 359.5h1M1066 359.5h1M1075 359.5h1M1105 359.5h1M1107 359.5h1M1064 360.5h1M1066 360.5h3M1076 360.5h1M1064 361.5h1M1066 361.5h2M1069 361.5h2M1107 361.5h1M1064 362.5h6M1072 362.5h1M1105 362.5h3M1110 362.5h1M1063 363.5h9M1078 363.5h1M1080 363.5h1M1082 363.5h1M1107 363.5h2M1064 364.5h9M1076 364.5h1M1078 364.5h2M1108 364.5h4M1065 365.5h6M1072 365.5h3M1076 365.5h7M1107 365.5h6M1065 366.5h4M1070 366.5h1M1073 366.5h1M1076 366.5h9M1095 366.5h1M1107 366.5h5M1113 366.5h1M1067 367.5h3M1074 367.5h1M1076 367.5h7M1095 367.5h1M1097 367.5h1M1108 367.5h3M1074 368.5h1M1076 368.5h7M1096 368.5h3M1100 368.5h1M1107 368.5h1M1111 368.5h1M1077 369.5h6M1084 369.5h1M1094 369.5h1M1096 369.5h3M1076 370.5h8M1094 370.5h5M1075 371.5h9M1094 371.5h4M1076 372.5h10M1093 372.5h1M1095 372.5h3M1077 373.5h9M1087 373.5h1M1093 373.5h5M1076 374.5h10M1093 374.5h6M1078 375.5h9M1093 375.5h6M1124 375.5h1M1131 375.5h1M1078 376.5h1M1080 376.5h1M1082 376.5h7M1091 376.5h2M1094 376.5h6M1102 376.5h1M1117 376.5h1M1124 376.5h1M1126 376.5h2M1129 376.5h3M1134 376.5h1M1079 377.5h1M1082 377.5h9M1093 377.5h6M1100 377.5h3M1116 377.5h1M1119 377.5h2M1123 377.5h5M1129 377.5h4M1134 377.5h1M1139 377.5h1M1083 378.5h20M1105 378.5h1M1107 378.5h1M1113 378.5h1M1115 378.5h18M1140 378.5h1M1084 379.5h20M1107 379.5h1M1113 379.5h26M1141 379.5h1M1084 380.5h1M1086 380.5h20M1107 380.5h1M1110 380.5h35M1087 381.5h21M1110 381.5h33M1144 381.5h1M1146 381.5h1M1087 382.5h60M1086 383.5h61M1086 384.5h1M1088 384.5h61M1088 385.5h62M1151 385.5h1M1089 386.5h62M1153 386.5h1M1091 387.5h2M1094 387.5h57M1152 387.5h1M1092 388.5h1M1096 388.5h1M1098 388.5h56M1266 388.5h1M1094 389.5h2M1099 389.5h54M1154 389.5h1M1257 389.5h1M1266 389.5h2M1269 389.5h1M1098 390.5h1M1100 390.5h54M1253 390.5h4M1259 390.5h1M1262 390.5h1M1267 390.5h4M1272 390.5h1M1081 391.5h2M1087 391.5h1M1090 391.5h3M1100 391.5h55M1250 391.5h3M1255 391.5h2M1260 391.5h1M1266 391.5h1M1270 391.5h2M1083 392.5h2M1090 392.5h1M1092 392.5h2M1095 392.5h1M1105 392.5h13M1119 392.5h1M1124 392.5h1M1126 392.5h2M1129 392.5h2M1134 392.5h3M1139 392.5h16M1254 392.5h8M1266 392.5h2M1270 392.5h1M1080 393.5h7M1090 393.5h7M1098 393.5h1M1107 393.5h1M1109 393.5h7M1117 393.5h1M1120 393.5h1M1125 393.5h3M1133 393.5h2M1136 393.5h2M1139 393.5h15M1250 393.5h1M1252 393.5h10M1081 394.5h18M1105 394.5h1M1107 394.5h1M1109 394.5h1M1113 394.5h2M1116 394.5h1M1127 394.5h1M1140 394.5h15M1240 394.5h3M1245 394.5h1M1251 394.5h12M1079 395.5h1M1081 395.5h18M1100 395.5h1M1109 395.5h2M1139 395.5h15M1238 395.5h1M1240 395.5h6M1248 395.5h1M1250 395.5h1M1252 395.5h9M1081 396.5h20M1140 396.5h16M1236 396.5h1M1238 396.5h7M1246 396.5h1M1251 396.5h1M1255 396.5h4M1080 397.5h21M1102 397.5h1M1139 397.5h1M1142 397.5h12M1204 397.5h1M1206 397.5h1M1210 397.5h1M1212 397.5h1M1231 397.5h1M1236 397.5h13M1252 397.5h1M1254 397.5h4M1259 397.5h1M1082 398.5h21M1139 398.5h1M1141 398.5h14M1205 398.5h1M1208 398.5h4M1229 398.5h1M1233 398.5h15M1253 398.5h1M1079 399.5h23M1143 399.5h14M1204 399.5h1M1206 399.5h5M1214 399.5h2M1230 399.5h19M1262 399.5h1M1082 400.5h21M1141 400.5h4M1147 400.5h1M1149 400.5h1M1152 400.5h5M1200 400.5h1M1202 400.5h1M1204 400.5h9M1215 400.5h3M1226 400.5h2M1229 400.5h20M1059 401.5h3M1081 401.5h25M1142 401.5h2M1147 401.5h1M1150 401.5h1M1153 401.5h1M1156 401.5h1M1199 401.5h1M1203 401.5h14M1224 401.5h2M1227 401.5h23M1260 401.5h1M1263 401.5h1M1058 402.5h3M1063 402.5h1M1082 402.5h22M1151 402.5h1M1154 402.5h2M1195 402.5h1M1198 402.5h1M1200 402.5h18M1220 402.5h1M1224 402.5h1M1226 402.5h22M1260 402.5h1M1262 402.5h1M1060 403.5h1M1081 403.5h1M1083 403.5h21M1105 403.5h1M1193 403.5h1M1195 403.5h1M1197 403.5h22M1223 403.5h20M1247 403.5h1M1250 403.5h1M1261 403.5h1M1083 404.5h23M1107 404.5h1M1194 404.5h27M1222 404.5h19M1242 404.5h2M1246 404.5h1M1248 404.5h1M1082 405.5h1M1084 405.5h22M1193 405.5h47M1245 405.5h1M1247 405.5h3M1083 406.5h1M1085 406.5h22M1109 406.5h1M1189 406.5h51M1246 406.5h1M1248 406.5h1M1083 407.5h24M1108 407.5h1M1189 407.5h48M1248 407.5h1M1086 408.5h25M1184 408.5h1M1190 408.5h46M1249 408.5h1M1086 409.5h28M1190 409.5h47M1087 410.5h25M1113 410.5h1M1182 410.5h1M1185 410.5h2M1189 410.5h46M1088 411.5h28M1181 411.5h1M1183 411.5h2M1186 411.5h1M1188 411.5h46M1235 411.5h1M1087 412.5h2M1090 412.5h25M1116 412.5h1M1167 412.5h1M1181 412.5h3M1186 412.5h1M1188 412.5h47M1091 413.5h25M1117 413.5h1M1163 413.5h2M1167 413.5h3M1181 413.5h1M1184 413.5h1M1187 413.5h42M1230 413.5h2M1091 414.5h1M1093 414.5h23M1117 414.5h1M1164 414.5h1M1168 414.5h1M1170 414.5h1M1184 414.5h41M1226 414.5h1M1094 415.5h25M1162 415.5h1M1165 415.5h3M1169 415.5h1M1184 415.5h38M1224 415.5h2M1227 415.5h1M1095 416.5h1M1097 416.5h20M1161 416.5h8M1184 416.5h39M1224 416.5h1M1095 417.5h1M1098 417.5h21M1157 417.5h1M1159 417.5h10M1170 417.5h2M1183 417.5h36M1220 417.5h1M1098 418.5h1M1100 418.5h6M1107 418.5h12M1141 418.5h2M1144 418.5h1M1153 418.5h1M1157 418.5h1M1160 418.5h10M1175 418.5h1M1177 418.5h2M1182 418.5h35M1218 418.5h1M1098 419.5h1M1100 419.5h1M1103 419.5h2M1106 419.5h1M1112 419.5h9M1143 419.5h2M1158 419.5h12M1173 419.5h4M1178 419.5h37M1216 419.5h2M1102 420.5h2M1112 420.5h1M1114 420.5h1M1116 420.5h5M1141 420.5h2M1145 420.5h1M1152 420.5h1M1154 420.5h1M1156 420.5h15M1172 420.5h39M1213 420.5h2M1100 421.5h1M1112 421.5h1M1117 421.5h3M1121 421.5h1M1123 421.5h1M1137 421.5h1M1139 421.5h11M1153 421.5h53M1208 421.5h3M1212 421.5h2M1117 422.5h1M1121 422.5h1M1123 422.5h1M1125 422.5h1M1132 422.5h1M1135 422.5h1M1138 422.5h11M1150 422.5h54M1207 422.5h1M1209 422.5h1M1212 422.5h2M1125 423.5h1M1127 423.5h1M1132 423.5h1M1134 423.5h72M1123 424.5h2M1127 424.5h1M1130 424.5h1M1132 424.5h1M1134 424.5h66M1201 424.5h1M1205 424.5h1M1212 424.5h1M1123 425.5h1M1125 425.5h2M1129 425.5h1M1131 425.5h69M1201 425.5h1M1210 425.5h1M1123 426.5h1M1125 426.5h72M1198 426.5h1M1207 426.5h1M1210 426.5h1M1214 426.5h1M1123 427.5h73M1207 427.5h3M1212 427.5h2M1124 428.5h68M1193 428.5h1M1209 428.5h1M1211 428.5h3M1124 429.5h68M1194 429.5h1M1125 430.5h66M1125 431.5h53M1179 431.5h3M1183 431.5h2M1186 431.5h2M1190 431.5h1M1123 432.5h51M1176 432.5h1M1178 432.5h1M1182 432.5h4M1125 433.5h1M1127 433.5h47M1176 433.5h1M1179 433.5h1M1127 434.5h46M1125 435.5h1M1127 435.5h47M1127 436.5h1M1129 436.5h48M1130 437.5h45M1128 438.5h1M1130 438.5h46M1178 438.5h1M1130 439.5h1M1133 439.5h10M1144 439.5h34M1133 440.5h7M1141 440.5h1M1143 440.5h4M1148 440.5h30M1132 441.5h2M1136 441.5h4M1141 441.5h1M1146 441.5h1M1149 441.5h3M1153 441.5h25M1179 441.5h1M1135 442.5h2M1138 442.5h1M1150 442.5h1M1152 442.5h1M1154 442.5h1M1156 442.5h3M1161 442.5h3M1165 442.5h14M1149 443.5h1M1154 443.5h1M1158 443.5h2M1161 443.5h1M1164 443.5h2M1167 443.5h13M1161 444.5h1M1165 444.5h1M1169 444.5h12M1167 445.5h2M1171 445.5h11M1184 445.5h1M1171 446.5h1M1173 446.5h11M1171 447.5h1M1173 447.5h13M1174 448.5h11M1186 448.5h2M1175 449.5h1M1177 449.5h9M1187 449.5h2M1177 450.5h11M1178 451.5h1M1180 451.5h12M1177 452.5h1M1181 452.5h10M1192 452.5h1M1180 453.5h1M1182 453.5h9M1192 453.5h1M1182 454.5h11M1183 455.5h1M1185 455.5h7M1193 455.5h1M1185 456.5h10M1185 457.5h1M1189 457.5h4M1194 457.5h1M1190 458.5h1M1192 458.5h2M1189 459.5h3" stroke="#f7f418" stroke-width="1" fill="none"/>
<path d="M1123 401.5h1M1133 401.5h1M1135 401.5h1M1124 402.5h1M1126 402.5h1M1129 402.5h1M1132 402.5h1M1135 402.5h1M1122 403.5h2M1128 403.5h5M1134 403.5h1M1124 404.5h13M1123 405.5h9M1134 405.5h1M1136 405.5h2M1122 406.5h1M1125 406.5h1M1129 406.5h4M1136 406.5h2M1124 407.5h2M1127 407.5h2M1131 407.5h1M1123 408.5h1M1128 408.5h1M1130 408.5h1M1164 408.5h1M1158 409.5h1M1163 409.5h2M1157 410.5h2M1160 410.5h1M1162 410.5h2M1165 410.5h1M1167 410.5h1M1153 411.5h2M1156 411.5h5M1165 411.5h2M1153 412.5h2M1156 412.5h1M1158 412.5h1M1160 412.5h1M1162 412.5h1M1165 412.5h1M1153 413.5h1M1155 413.5h1M1157 413.5h2" stroke="#f7f418" stroke-width="1" fill="none"/>
<g font-family="Liberation Sans, sans-serif" font-weight="bold" font-size="12.7" fill="#cdcdcd">
<text x="900.7" y="366.3" text-anchor="end">150</text><text x="920.3" y="396.2" text-anchor="end">100</text><text x="940.9" y="427.7" text-anchor="end">50</text><text x="962.7" y="460.8" text-anchor="end">0</text><text x="986.1" y="496.3" text-anchor="end">-50</text><text x="1010.9" y="533.2" text-anchor="end">-100</text><text x="1074.8" y="566.5" text-anchor="start">100</text><text x="1137.4" y="548.2" text-anchor="start">50</text><text x="1199.4" y="531.0" text-anchor="start">0</text><text x="1259.4" y="514.0" text-anchor="start">-50</text><text x="1317.9" y="497.3" text-anchor="start">-100</text><text x="1375.0" y="481.1" text-anchor="start">-150</text><text x="891.0" y="306.9" text-anchor="end">10</text><text x="891.7" y="317.1" text-anchor="end">0</text>
</g>
</g></svg>
<!-- p7_img -->
<div class="box" style="left:327px;top:298px;width:502px;height:245.6px;background:#fff;"></div>
<svg style="left:328px;top:299px" width="500" height="243.6" viewBox="0 0 500 243" preserveAspectRatio="none">
<defs>
<clipPath id="ic"><rect x="0" y="0" width="500" height="243"/></clipPath>
<filter id="rough2" x="-5%" y="-5%" width="110%" height="110%"><feTurbulence type="fractalNoise" baseFrequency="0.2" numOctaves="2" seed="9" result="n"/><feDisplacementMap in="SourceGraphic" in2="n" scale="7" xChannelSelector="R" yChannelSelector="G"/></filter>
<filter id="rough3" x="-5%" y="-5%" width="110%" height="110%"><feTurbulence type="fractalNoise" baseFrequency="0.35" numOctaves="2" seed="5" result="n"/><feDisplacementMap in="SourceGraphic" in2="n" scale="9" xChannelSelector="R" yChannelSelector="G"/><feGaussianBlur stdDeviation="0.6"/></filter>
<filter id="speck" x="0" y="0" width="100%" height="100%"><feTurbulence type="fractalNoise" baseFrequency="0.27 0.3" numOctaves="3" seed="12"/><feColorMatrix type="matrix" values="0 0 0 0 0.93  0 0 0 0 0.92  0 0 0 0 0.95  4.5 3.5 0 0 -4.4"/><feComposite in2="SourceGraphic" operator="in"/></filter>
<filter id="speck2" x="0" y="0" width="100%" height="100%"><feTurbulence type="fractalNoise" baseFrequency="0.22 0.25" numOctaves="3" seed="31"/><feColorMatrix type="matrix" values="0 0 0 0 0.95  0 0 0 0 0.94  0 0 0 0 0.97  4.5 3.5 0 0 -3.9"/><feComposite in2="SourceGraphic" operator="in"/></filter>
<filter id="grain" x="0" y="0" width="100%" height="100%" color-interpolation-filters="sRGB"><feTurbulence type="fractalNoise" baseFrequency="0.55" numOctaves="2" seed="3"/><feColorMatrix type="matrix" values="1.6 0 0 0 -0.3  1.6 0 0 0 -0.3  1.6 0 0 0 -0.3  0 0 0 0 1"/></filter>
<filter id="rb" x="-5%" y="-5%" width="110%" height="110%"><feTurbulence type="fractalNoise" baseFrequency="0.3" numOctaves="2" seed="21" result="n"/><feDisplacementMap in="SourceGraphic" in2="n" scale="6" xChannelSelector="R" yChannelSelector="G"/><feGaussianBlur stdDeviation="1.1"/></filter>
<filter id="b2"><feGaussianBlur stdDeviation="1.6"/></filter>
<filter id="b5"><feGaussianBlur stdDeviation="5"/></filter>
<linearGradient id="gl" x1="0" y1="0" x2="0" y2="1"><stop offset="0" stop-color="#2c3028"/><stop offset="0.3" stop-color="#363a30"/><stop offset="1" stop-color="#353930"/></linearGradient>
<radialGradient id="vg" cx="0.5" cy="0.45" r="0.75"><stop offset="0.55" stop-color="#000" stop-opacity="0"/><stop offset="1" stop-color="#000" stop-opacity="0.16"/></radialGradient>
<linearGradient id="bd" x1="0" y1="0" x2="0" y2="1"><stop offset="0" stop-color="#000" stop-opacity="0"/><stop offset="1" stop-color="#000" stop-opacity="0.18"/></linearGradient>
<linearGradient id="fade" x1="0" y1="0" x2="0" y2="1"><stop offset="0" stop-color="#fff"/><stop offset="0.4" stop-color="#fff" stop-opacity="0.75"/><stop offset="0.7" stop-color="#fff" stop-opacity="0.25"/><stop offset="1" stop-color="#fff" stop-opacity="0"/></linearGradient>
<mask id="fm3"><rect x="335" y="0" width="165" height="45" fill="url(#fade)"/></mask>
<mask id="fm"><rect x="250" y="0" width="250" height="100" fill="url(#fade)"/></mask>
<radialGradient id="rf" cx="0.7" cy="0" r="0.75"><stop offset="0" stop-color="#fff"/><stop offset="1" stop-color="#fff" stop-opacity="0"/></radialGradient><mask id="fm2"><rect x="30" y="0" width="140" height="50" fill="url(#rf)"/></mask>
</defs>
<g clip-path="url(#ic)">
<rect width="500" height="243" fill="#292a23"/>
<!-- canopy tones -->
<g filter="url(#b5)">
<path d="M252 60 C262 20 290 -5 310 0 C330 10 340 50 332 70 C360 30 380 20 400 30 C420 50 430 70 440 80 C460 60 480 50 505 56 V150 H250 Z" fill="#37382c"/>
<path d="M250 100 H505 V150 H250 Z" fill="#313128"/>
<ellipse cx="150" cy="100" rx="70" ry="30" fill="#313128"/>
<ellipse cx="310" cy="66" rx="36" ry="44" fill="#3b3b2e"/>
<ellipse cx="395" cy="100" rx="50" ry="26" fill="#393a2d"/>
<ellipse cx="470" cy="95" rx="40" ry="30" fill="#35362a"/>
</g>
<!-- birch trunks -->
<path d="M67 22 L60 120 L57 135 L60 135 L69 22 Z" fill="#4e4b40" opacity="0.8"/>
<path d="M77 52 L70 125 L72 125 L79 52 Z" fill="#45423a" opacity="0.7"/>
<!-- ground -->
<g filter="url(#b5)">
<path d="M-10 140 C60 134 150 128 215 123 L250 117 C300 128 380 138 510 142 V250 H-10 Z" fill="url(#gl)"/>
<path d="M-10 170 C60 154 140 142 206 136 L176 250 H-10 Z" fill="#3a3e33"/>
<path d="M30 200 C70 170 140 160 190 160 L150 250 H20 Z" fill="#414438"/>
<path d="M264 136 C330 142 420 150 510 154 V250 H302 Z" fill="#3d4137"/>
<ellipse cx="440" cy="146" rx="70" ry="10" fill="#31352c"/>
<ellipse cx="60" cy="150" rx="80" ry="14" fill="#2b2f27"/>
</g>
<!-- road tracks -->
<g filter="url(#rb)">
<path d="M251 108 L247 122 L224 126.5 L209 136 L197 152 L184 170 L170 190 L153 212 L137 234 L128 246 L178 246 L172 232 L183 212 L193 190 L203 170 L212 152 L222 138 L238 129 L250 125 L253 110 Z" fill="#555049"/>
<path d="M246 123.5 L226 126.5 L211 136.5 L200 152 L190 168 L198 170 L208 153 L219 139 L236 129.5 L249 126 Z" fill="#90887c"/>
<path d="M190 168 L178 186 L166 204 L176 207 L186 188 L198 170 Z" fill="#706960"/>
<path d="M166 204 L152 224 L168 228 L176 207 Z" fill="#605b53"/>
<path d="M248 128 L251 150 L256 172 L262 193 L268 216 L272 246 L306 246 L296 225 L286 200 L274 172 L264 150 L255 130 Z" fill="#47443e"/>
<path d="M257 160 L263 185 L270 212 L276 236 L290 236 L282 212 L273 185 L264 160 Z" fill="#57534c"/>
<path d="M242 136 L232 150 L218 172 L204 196 L194 212 L197 213 L208 196 L222 172 L236 150 L245 137 Z" fill="#524e47" opacity="0.8"/>
</g>
<!-- film grain -->
<rect width="500" height="243" filter="url(#grain)" opacity="0.28" style="mix-blend-mode:overlay"/>
<rect width="500" height="243" fill="url(#vg)"/>
<rect y="200" width="500" height="43" fill="url(#bd)"/>
<!-- sky -->
<g filter="url(#rough2)">
<path d="M118 -6 L126 17 L140 33 L160 37 L155 52 L169 58 L178 51 L190 44 L199 53 L209 67 L211 76 L229 83 L243 83 L249 93 L251 53 L260 35 L269 17 L272 -6 Z" fill="#f5f3f9"/>
</g>
<g filter="url(#rough3)">
<path d="M323 -6 L327 20 L336 42 L344 48 L352 40 L362 22 L366 -6 Z" fill="#f2f0f6"/>
<path d="M416 10 L420 40 L430 54 L442 46 L446 16 L434 0 Z" fill="#ebe9ef"/>
<path d="M270 -6 L276 14 L290 6 L298 -6 Z" fill="#f2f0f6"/>
</g>
<!-- thin tree in the sky -->
<path d="M193 30 L190 52 L197 52 Z" fill="#77756f" filter="url(#rough2)"/>
<!-- sky speckles through canopy -->
<g mask="url(#fm)"><rect x="250" y="0" width="250" height="100" fill="#fff" filter="url(#speck)"/></g>
<g mask="url(#fm3)"><rect x="335" y="0" width="165" height="45" fill="#fff" filter="url(#speck2)"/></g>
<ellipse cx="294" cy="62" rx="26" ry="34" fill="#36382c" opacity="0.6" filter="url(#rough3)"/>
<g mask="url(#fm2)" opacity="0.6"><rect x="30" y="0" width="140" height="50" fill="#fff" filter="url(#speck)"/></g>
<!-- hood -->
<path d="M60 246 C130 238 190 236 240 236 C285 236 318 239 340 246 Z" fill="#33426a"/>
<path d="M120 246 C170 240.5 220 239.5 260 240 C290 240.8 310 242.5 322 246 Z" fill="#43548a"/>
</g></svg>
</body>
</html>
